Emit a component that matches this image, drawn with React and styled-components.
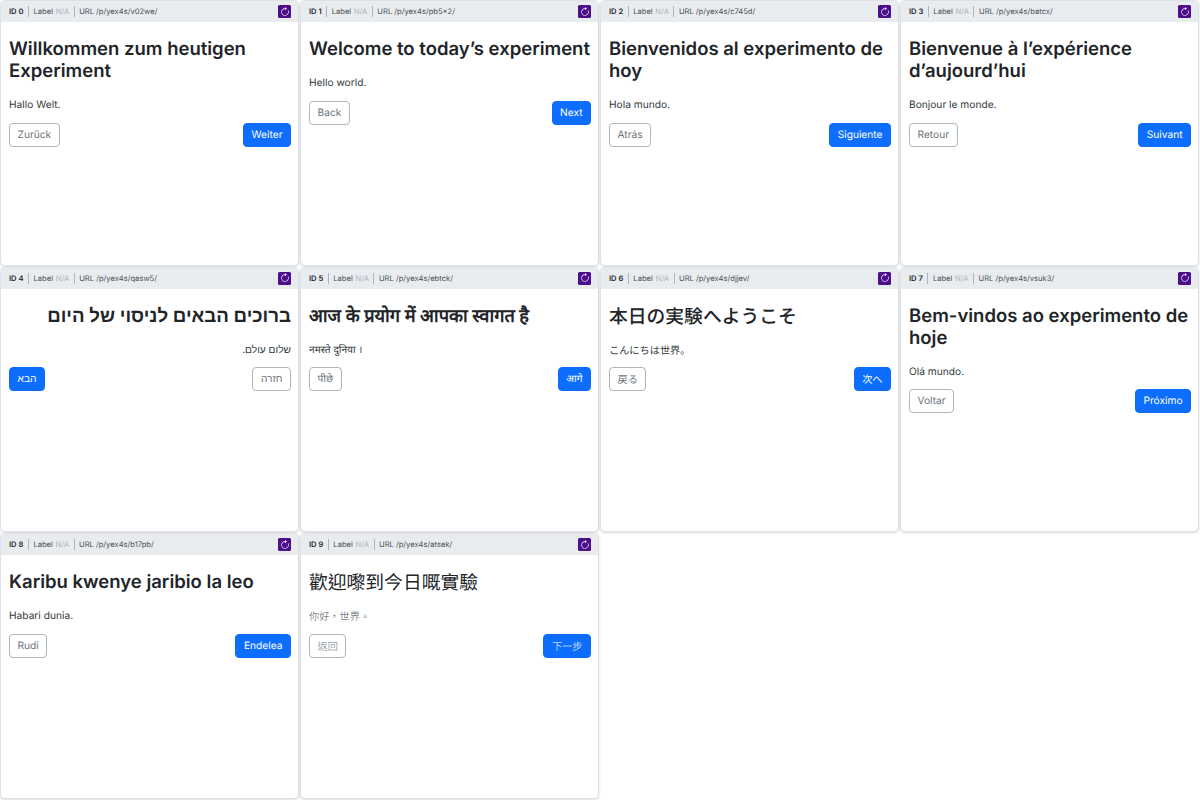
import React from 'react';
import styled, { createGlobalStyle } from 'styled-components';
import { BsArrowClockwise } from 'react-icons/bs';

const GlobalStyle = createGlobalStyle`
  html, body {
    margin: 0;
    padding: 0;
    background: #fff;
  }
  * {
    box-sizing: border-box;
  }
`;

const Grid = styled.div`
  display: grid;
  grid-template-columns: repeat(4, 300px);
  grid-auto-rows: 266.67px;
  width: 1200px;
  height: 800px;
  font-family: Inter, sans-serif;
  color: #212529;
  text-rendering: geometricPrecision;
`;

const Card = styled.div`
  display: flex;
  flex-direction: column;
  margin: 0 1px 1px 0;
  background: #fff;
  border: 1px solid #dee2e6;
  border-radius: 5px;
  overflow: hidden;
  box-shadow: 0 1px 3px rgba(0, 0, 0, 0.14);
`;

const Header = styled.div`
  display: flex;
  align-items: center;
  height: 21px;
  padding: 0 7px 0 8px;
  background: #e9ecef;
  font-size: 7.6px;
  color: #495057;
`;

const Id = styled.span`
  font-weight: 600;
  color: #212529;
`;

const Sep = styled.span`
  width: 1px;
  height: 11px;
  margin: 0 4.5px;
  background: #adb5bd;
`;

const Muted = styled.span`
  color: #adb5bd;
  margin-left: 0.5px;
`;

const Reload = styled.div`
  display: flex;
  align-items: center;
  justify-content: center;
  width: 13px;
  height: 13px;
  margin-left: auto;
  border-radius: 1.5px;
  background: #4c0e8a;
  color: #fff;
  font-size: 10px;
`;

const Body = styled.div`
  padding: 16px 7px 0 8px;
`;

const FONTS = {
  ja: '"Noto Sans CJK JP", sans-serif',
  zh: '"Noto Sans CJK TC", sans-serif',
};

const TITLE_SIZES = { ja: 18.8, zh: 18.8, he: 18.7, hi: 18.2 };
const TITLE_WEIGHTS = { ja: 500, zh: 400 };

const Title = styled.h1`
  margin: 0 0 14px;
  font-family: ${(p) => FONTS[p.$lang] || 'inherit'};
  font-size: ${(p) => TITLE_SIZES[p.$lang] || 18.5}px;
  font-weight: ${(p) => TITLE_WEIGHTS[p.$lang] || 600};
  line-height: 22px;
  text-align: ${(p) => (p.$lang === 'he' ? 'right' : 'left')};
`;

const Text = styled.p`
  margin: 0 0 8.5px;
  font-family: ${(p) => FONTS[p.$lang] || 'inherit'};
  font-weight: ${(p) => (p.$lang === 'zh' ? 300 : 400)};
  font-size: 10.2px;
  line-height: 18px;
  color: ${(p) => (p.$lang === 'zh' ? '#495057' : '#343a40')};
  text-align: ${(p) => (p.$lang === 'he' ? 'right' : 'left')};
`;

const Actions = styled.div`
  display: flex;
  justify-content: space-between;
`;

const BackButton = styled.div`
  padding: 0 7.5px;
  height: 24px;
  line-height: 22px;
  border: 1px solid #adb5bd;
  border-radius: 4px;
  font-family: ${(p) => FONTS[p.$lang] || 'inherit'};
  font-weight: ${(p) => (p.$lang === 'zh' ? 300 : 400)};
  font-size: 10.2px;
  color: #6c757d;
`;

const NextButton = styled(BackButton)`
  border-color: #0d6efd;
  background: #0d6efd;
  color: #fff;
`;

const PAGES = [
  { id: 0, url: 'v02we', title: 'Willkommen zum heutigen Experiment', text: 'Hallo Welt.', back: 'Zurück', next: 'Weiter' },
  { id: 1, url: 'pb5×2', title: 'Welcome to today’s experiment', text: 'Hello world.', back: 'Back', next: 'Next' },
  { id: 2, url: 'c745d', title: 'Bienvenidos al experimento de hoy', text: 'Hola mundo.', back: 'Atrás', next: 'Siguiente' },
  { id: 3, url: 'batcx', title: 'Bienvenue à l’expérience d’aujourd’hui', text: 'Bonjour le monde.', back: 'Retour', next: 'Suivant' },
  { id: 4, url: 'qasw5', title: 'ברוכים הבאים לניסוי של היום', text: 'שלום עולם.', back: 'חזרה', next: 'הבא', lang: 'he' },
  { id: 5, url: 'ebtck', title: 'आज के प्रयोग में आपका स्वागत है', text: 'नमस्ते दुनिया ।', back: 'पीछे', next: 'आगे', lang: 'hi' },
  { id: 6, url: 'djjev', title: '本日の実験へようこそ', text: 'こんにちは世界。', back: '戻る', next: '次へ', lang: 'ja' },
  { id: 7, url: 'vsuk3', title: 'Bem-vindos ao experimento de hoje', text: 'Olá mundo.', back: 'Voltar', next: 'Próximo' },
  { id: 8, url: 'b17pb', title: 'Karibu kwenye jaribio la leo', text: 'Habari dunia.', back: 'Rudi', next: 'Endelea' },
  { id: 9, url: 'atsek', title: '歡迎嚟到今日嘅實驗', text: '你好，世界。', back: '返回', next: '下一步', lang: 'zh' },
];

function App() {
  return (
    <>
      <GlobalStyle />
      <Grid>
        {PAGES.map((page) => (
          <Card key={page.id}>
            <Header>
              <Id>ID {page.id}</Id>
              <Sep />
              <span>Label <Muted>N/A</Muted></span>
              <Sep />
              <span>URL /p/yex4s/{page.url}/</span>
              <Reload><BsArrowClockwise /></Reload>
            </Header>
            <Body dir={page.lang === 'he' ? 'rtl' : 'ltr'}>
              <Title $lang={page.lang}>{page.title}</Title>
              <Text $lang={page.lang}>{page.text}</Text>
              <Actions>
                <BackButton $lang={page.lang}>{page.back}</BackButton>
                <NextButton $lang={page.lang}>{page.next}</NextButton>
              </Actions>
            </Body>
          </Card>
        ))}
      </Grid>
    </>
  );
}

export default App;
